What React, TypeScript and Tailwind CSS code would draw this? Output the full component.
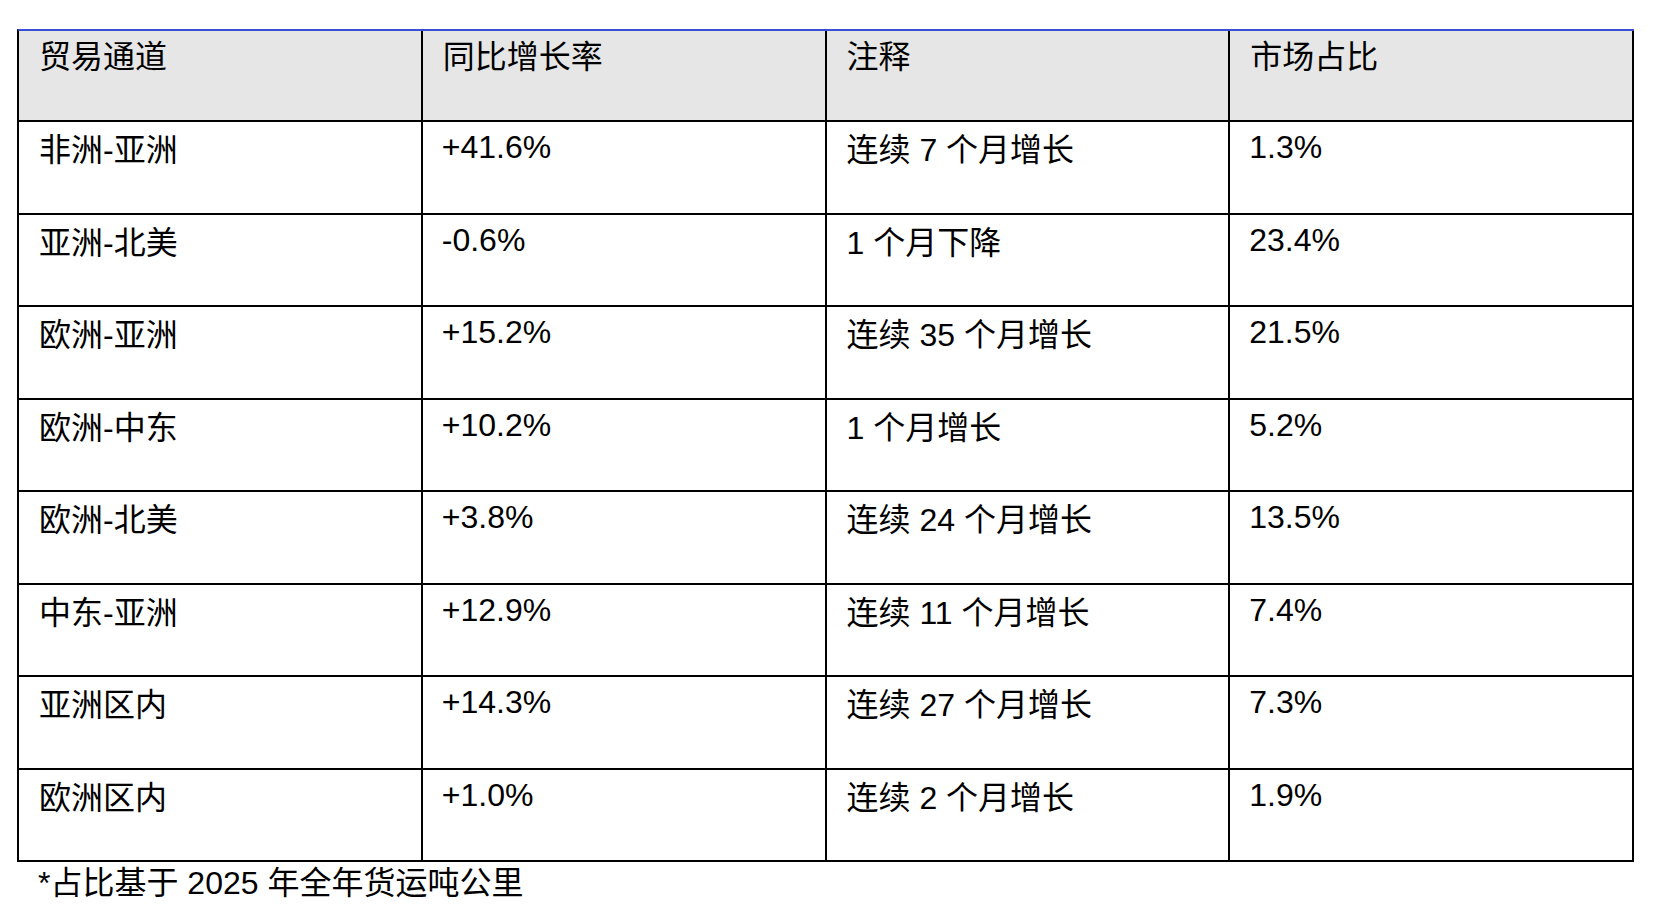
const headers = ["贸易通道", "同比增长率", "注释", "市场占比"];

const rows = [
  ["非洲-亚洲", "+41.6%", "连续 7 个月增长", "1.3%"],
  ["亚洲-北美", "-0.6%", "1 个月下降", "23.4%"],
  ["欧洲-亚洲", "+15.2%", "连续 35 个月增长", "21.5%"],
  ["欧洲-中东", "+10.2%", "1 个月增长", "5.2%"],
  ["欧洲-北美", "+3.8%", "连续 24 个月增长", "13.5%"],
  ["中东-亚洲", "+12.9%", "连续 11 个月增长", "7.4%"],
  ["亚洲区内", "+14.3%", "连续 27 个月增长", "7.3%"],
  ["欧洲区内", "+1.0%", "连续 2 个月增长", "1.9%"],
];

export default function App() {
  return (
    <div className="min-h-screen bg-white pl-[17px] pt-[29px] text-[32px] leading-[38px] text-black [font-family:'Liberation_Sans','Noto_Sans_CJK_SC',sans-serif]">
      <div className="w-[1617px] border-l-2 border-t-2 border-l-black border-t-[#3a4fd8]">
        <div className="grid grid-cols-4 bg-[#e6e6e6]">
          {headers.map((h) => (
            <div key={h} className="h-[91px] border-b-2 border-r-2 border-black pl-[20px] pt-[7px]">
              {h}
            </div>
          ))}
        </div>
        {rows.map((r) => (
          <div key={r[0]} className="grid grid-cols-4">
            {r.map((c, i) => (
              <div
                key={i}
                className={
                  i % 2 === 1
                    ? "h-[92.5px] border-b-2 border-r-2 border-black pl-[19px] pt-[6px]"
                    : "h-[92.5px] border-b-2 border-r-2 border-black pl-[20px] pt-[9px]"
                }
              >
                {c}
              </div>
            ))}
          </div>
        ))}
      </div>
      <p className="mt-[2px] pl-[21px]">*占比基于 2025 年全年货运吨公里</p>
    </div>
  );
}
